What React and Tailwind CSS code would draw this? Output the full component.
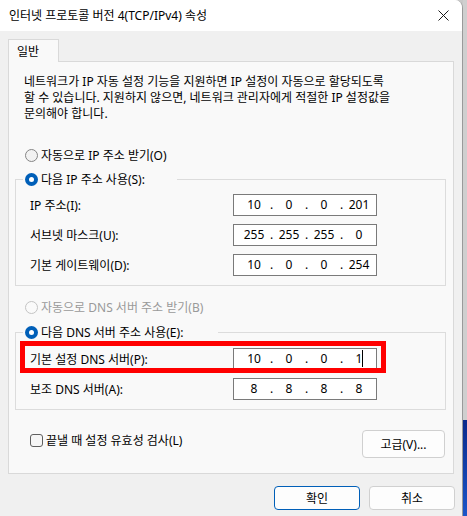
import React, { Fragment } from 'react';

const FONT = "font-['Noto_Sans','Noto_Sans_CJK_KR',sans-serif]";

function Radio({ checked, disabled }) {
  if (checked) {
    return (
      <span className="flex h-[13px] w-[13px] shrink-0 items-center justify-center rounded-full bg-[#005fb8]">
        <span className="h-[5px] w-[5px] rounded-full bg-white" />
      </span>
    );
  }
  return (
    <span
      className={`h-[13px] w-[13px] shrink-0 rounded-full border ${
        disabled ? 'border-[#c4c4c4] bg-[#fafafa]' : 'border-[#858585] bg-[#f2f2f2]'
      }`}
    />
  );
}

function IpBox({ parts, caret }) {
  return (
    <div className="flex h-[22px] w-[144px] shrink-0 items-center border border-[#7a7a7a] bg-white pl-[6px] leading-none">
      {parts.map((p, i) => (
        <Fragment key={i}>
          <span className="relative w-[28px] text-center">
            {p}
            {caret && i === 3 && (
              <span className="absolute top-[-3px] left-[17px] h-[17px] w-px bg-black" />
            )}
          </span>
          {i < 3 && <span className="w-[7px] text-center">.</span>}
        </Fragment>
      ))}
    </div>
  );
}

function Row({ label, parts, caret, children }) {
  return (
    <div className="relative flex items-center pl-[14px]">
      <span className="w-[203px]">{label}</span>
      <IpBox parts={parts} caret={caret} />
      {children}
    </div>
  );
}

export default function App() {
  return (
    <div className={`flex h-[516px] w-[467px] overflow-hidden bg-[#c9c9c9] text-[12px] leading-[15px] text-black ${FONT}`}>
      {/* dialog window */}
      <div className="flex h-full w-[463px] flex-col overflow-hidden rounded-tr-[8px] border-r border-[#9a9a9a] bg-[#f0f0f0]">
        {/* title bar */}
        <div className="flex h-[31px] shrink-0 items-center justify-between bg-white pr-[13px] pl-[9px]">
          <span className="text-[12px]">인터넷 프로토콜 버전 4(TCP/IPv4) 속성</span>
          <svg width="11" height="11" viewBox="0 0 11 11" className="text-[#1a1a1a]">
            <path d="M0.5 0.5 L10.5 10.5 M10.5 0.5 L0.5 10.5" stroke="currentColor" strokeWidth="1" />
          </svg>
        </div>

        <div className="flex flex-col pr-[8px] pl-[8px]">
          {/* tab */}
          <div className="mt-[8px] flex">
            <div className="relative z-10 -mb-px flex h-[23px] w-[51px] items-center border border-b-0 border-[#d9d9d9] bg-[#f9f9f9] pl-[8px]">
              일반
            </div>
          </div>

          {/* tab panel */}
          <div className="flex h-[413px] flex-col border border-[#d9d9d9] bg-[#f9f9f9]">
            <p className="pt-[12px] pl-[15px] leading-[16px]">
              네트워크가 IP 자동 설정 기능을 지원하면 IP 설정이 자동으로 할당되도록
              <br />
              할 수 있습니다. 지원하지 않으면, 네트워크 관리자에게 적절한 IP 설정값을
              <br />
              문의해야 합니다.
            </p>

            <label className="mt-[26px] flex items-center gap-[3px] pl-[16px]">
              <Radio />
              <span>자동으로 IP 주소 받기(O)</span>
            </label>

            <fieldset className="mt-[9px] mr-[7px] ml-[6px] border border-[#dcdcdc] pb-[9px]">
              <legend className="ml-[7px] flex items-center gap-[3px] pr-[32px] pl-[2px]">
                <Radio checked />
                <span>다음 IP 주소 사용(S):</span>
              </legend>
              <div className="mt-[7px] flex flex-col gap-[8px]">
                <Row label="IP 주소(I):" parts={['10', '0', '0', '201']} />
                <Row label="서브넷 마스크(U):" parts={['255', '255', '255', '0']} />
                <Row label="기본 게이트웨이(D):" parts={['10', '0', '0', '254']} />
              </div>
            </fieldset>

            <label className="mt-[14px] flex items-center gap-[3px] pl-[16px] text-[#9a9a9a]">
              <Radio disabled />
              <span>자동으로 DNS 서버 주소 받기(B)</span>
            </label>

            <fieldset className="mt-[10px] mr-[7px] ml-[6px] border border-[#dcdcdc] pb-[9px]">
              <legend className="ml-[7px] flex items-center gap-[3px] pr-[35px] pl-[2px]">
                <Radio checked />
                <span>다음 DNS 서버 주소 사용(E):</span>
              </legend>
              <div className="mt-[8px] flex flex-col gap-[8px]">
                <Row label="기본 설정 DNS 서버(P):" parts={['10', '0', '0', '1']} caret>
                  <div className="pointer-events-none absolute top-[-7px] left-[4px] h-[32px] w-[366px] border-[5px] border-[#ff0000]" />
                </Row>
                <Row label="보조 DNS 서버(A):" parts={['8', '8', '8', '8']} />
              </div>
            </fieldset>

            <div className="mt-[20px] flex items-start justify-between pr-[8px] pl-[21px]">
              <label className="mt-[3px] flex items-center gap-[3px]">
                <span className="h-[13px] w-[13px] rounded-[3px] border border-[#5f5f5f] bg-[#f6f6f6]" />
                <span>끝낼 때 설정 유효성 검사(L)</span>
              </label>
              <button className="flex h-[28px] w-[83px] items-center justify-center rounded-[4px] border border-[#d0d0d0] bg-[#fdfdfd]">
                고급(V)...
              </button>
            </div>
          </div>

          {/* dialog buttons */}
          <div className="mt-[12px] flex justify-end gap-[9px] pr-[0px]">
            <button className="flex h-[24px] w-[86px] items-center justify-center rounded-[4px] border border-[#005fb8] bg-[#fdfdfd]">
              확인
            </button>
            <button className="mr-[-1px] flex h-[24px] w-[86px] items-center justify-center rounded-[4px] border border-[#d0d0d0] bg-[#fdfdfd]">
              취소
            </button>
          </div>
        </div>
      </div>

      {/* desktop behind the window */}
      <div className="flex flex-1 flex-col">
        <div className="h-[420px] bg-[#cfcfcf]" />
        <div className="flex-1 bg-gradient-to-b from-[#0b2a8c] to-[#1b55c8]" />
      </div>
    </div>
  );
}
